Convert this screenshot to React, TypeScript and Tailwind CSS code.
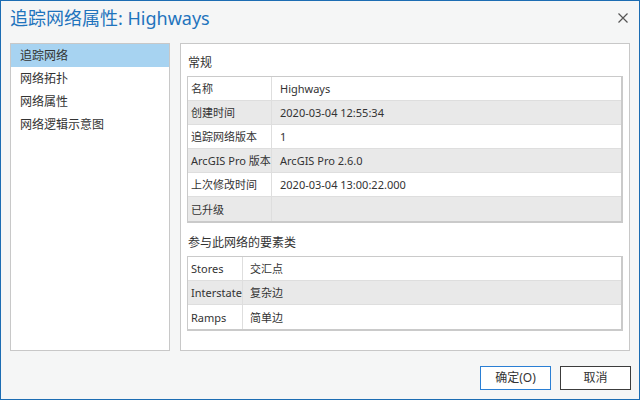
import React from "react";

const general: [string, string][] = [
  ["名称", "Highways"],
  ["创建时间", "2020-03-04 12:55:34"],
  ["追踪网络版本", "1"],
  ["ArcGIS Pro 版本", "ArcGIS Pro 2.6.0"],
  ["上次修改时间", "2020-03-04 13:00:22.000"],
  ["已升级", ""],
];

const classes: [string, string][] = [
  ["Stores", "交汇点"],
  ["Interstate", "复杂边"],
  ["Ramps", "简单边"],
];

const nav = ["追踪网络", "网络拓扑", "网络属性", "网络逻辑示意图"];

export default function App() {
  return (
    <div className="w-[640px] h-[400px] border border-[#1c6db3] bg-[#f5f6f6] flex flex-col font-['Noto_Sans','Noto_Sans_CJK_SC',sans-serif] text-[#333333]">
      <div className="h-[36px] flex items-center justify-between pl-[9px] pr-[11px] shrink-0">
        <div className="text-[18px] leading-[20px] text-[#1f74bd] mt-[-2px]">追踪网络属性: Highways</div>
        <svg width="10" height="10" viewBox="0 0 10 10" className="mt-[-2px]">
          <path d="M0.5 0.5 L9.5 9.5 M9.5 0.5 L0.5 9.5" stroke="#555" strokeWidth="1.2" />
        </svg>
      </div>
      <div className="flex gap-[10px] pl-[9px] pr-[9px] mt-[6px] h-[308px] shrink-0">
        <div className="w-[160px] h-full bg-white border border-[#c8c8c8] flex flex-col">
          {nav.map((n, i) => (
            <div
              key={n}
              className={`h-[23px] flex items-center pl-[9px] text-[12px] leading-[14px] ${i === 0 ? "bg-[#a7d3f1]" : ""}`}
            >
              {n}
            </div>
          ))}
        </div>
        <div className="flex-1 h-full bg-white border border-[#c8c8c8] px-[6px] flex flex-col">
          <div className="h-[32px] flex items-end pb-[6px] text-[12px] leading-[14px] pl-[1px]">常规</div>
          <div className="border border-[#cacaca] border-r-2 border-b-2">
            {general.map(([k, v], i) => (
              <div
                key={k}
                className={`h-[24px] flex text-[11px] leading-[13px] ${i % 2 === 1 ? "bg-[#e9e9e9]" : "bg-white"} ${i < general.length - 1 ? "border-b border-[#dedede]" : ""}`}
              >
                <div className="w-[84px] border-r border-[#dedede] flex items-center pl-[3px] whitespace-nowrap">{k}</div>
                <div className="flex-1 flex items-center pl-[8px]">{v}</div>
              </div>
            ))}
          </div>
          <div className="h-[33px] flex items-end pb-[6px] text-[12px] leading-[14px] pl-[1px]">参与此网络的要素类</div>
          <div className="border border-[#cacaca] border-r-2 border-b-2">
            {classes.map(([k, v], i) => (
              <div
                key={k}
                className={`h-[24px] flex text-[11px] leading-[13px] ${i % 2 === 1 ? "bg-[#e9e9e9]" : "bg-white"} ${i < classes.length - 1 ? "border-b border-[#dedede]" : ""}`}
              >
                <div className="w-[55px] border-r border-[#dedede] flex items-center pl-[3px] whitespace-nowrap">{k}</div>
                <div className="flex-1 flex items-center pl-[7px]">{v}</div>
              </div>
            ))}
          </div>
        </div>
      </div>
      <div className="flex justify-end gap-[9px] pr-[8px] mt-[15px]">
        <button className="w-[71px] h-[24px] border border-[#2a7fd4] bg-white text-[12px] leading-[14px] text-[#333]">确定(O)</button>
        <button className="w-[71px] h-[24px] border border-[#3c3c3c] bg-white text-[12px] leading-[14px] text-[#333]">取消</button>
      </div>
    </div>
  );
}
